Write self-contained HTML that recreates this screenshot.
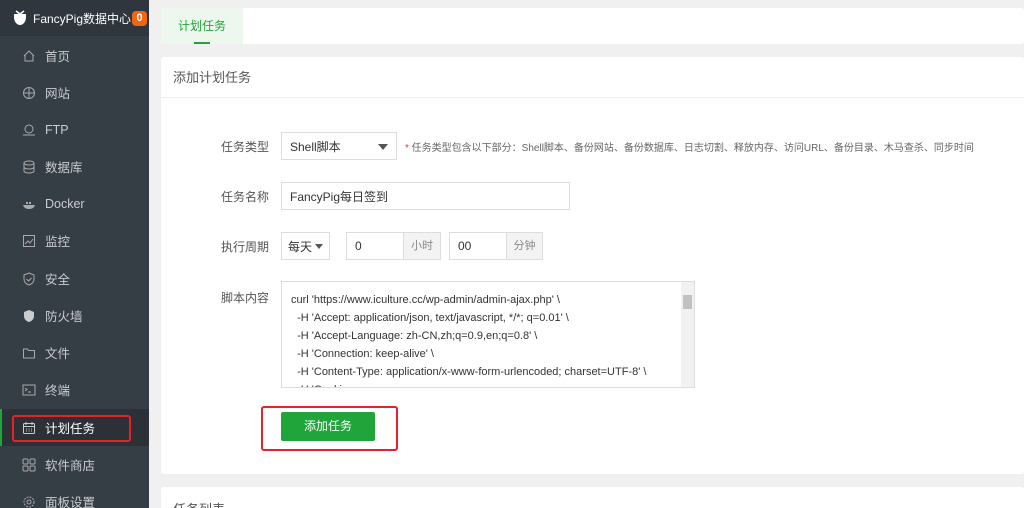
<!DOCTYPE html>
<html style="width:1024px;height:508px;overflow:hidden"><head><meta charset="utf-8"><style>
*{margin:0;padding:0;box-sizing:border-box}
body{width:1024px;height:508px;overflow:hidden;background:#f0f0f0;font-family:"Liberation Sans","Noto Sans CJK SC",sans-serif;font-size:12px;color:#555;position:relative}
.sb{position:absolute;left:0;top:0;width:149px;height:508px;background:#353d45}
.logo{height:36px;background:#2f363d;color:#fff;font-size:12px;display:flex;align-items:center;padding-left:13px;white-space:nowrap}
.badge{background:#f5640f;color:#fff;border-radius:4px;font-size:11px;font-weight:bold;width:15px;height:15px;display:inline-flex;align-items:center;justify-content:center;margin-left:1px}
.it{position:absolute;left:0;width:149px;height:37px;display:flex;align-items:center;padding-left:22px;color:#c9ccd0;font-size:12.5px}
.it .ic{width:14px;height:14px;margin-right:9px;display:inline-block}
.act{background:#2b3137;border-left:2px solid #20a53a;padding-left:20px;color:#fff}
.red{position:absolute;left:12px;top:415px;width:119px;height:27px;border:2px solid #e5222a;border-radius:3px}
.tabs{position:absolute;left:161px;top:8px;width:863px;height:36px;background:#fff;border-radius:3px}
.tab{position:absolute;left:0;top:0;width:82px;height:36px;background:#eef7ee;color:#20a53a;font-size:12px;text-align:center;line-height:36px}
.tab:after{content:"";position:absolute;left:33px;bottom:0;width:16px;height:2px;background:#20a53a}
.card{position:absolute;left:161px;top:57px;width:863px;height:417px;background:#fff;border-radius:3px}
.ch{height:41px;border-bottom:1px solid #eee;padding-left:12px;line-height:41px;font-size:13px;color:#555}
.lab{position:absolute;font-size:12px;color:#555}
.in{position:absolute;border:1px solid #ddd;background:#fff;font-size:12px;color:#333;padding-left:8px;display:flex;align-items:center}
</style></head><body>
<div class="sb">
<div class="logo"><svg width="14" height="16" viewBox="0 0 14 16" style="margin-right:6px;flex:none"><path d="M1 4h12v3c0 5-3 8-6 8S1 12 1 7z" fill="#fff"/><path d="M3 1l4 3 4-3" stroke="#fff" fill="none" stroke-width="1.5"/></svg>FancyPig数据中心<span class="badge">0</span></div>
</div>
<div class="it" style="top:37px"><svg class="ic" viewBox="0 0 14 14"><path d="M2 7l5-5 5 5M3 6v6h8V6" stroke="#aaa" fill="none"/></svg>首页</div>
<div class="it" style="top:74px"><svg class="ic" viewBox="0 0 14 14"><circle cx="7" cy="7" r="5.5" stroke="#aaa" fill="none"/><path d="M2 7h10M7 1.5v11" stroke="#aaa"/></svg>网站</div>
<div class="it" style="top:111px"><svg class="ic" viewBox="0 0 14 14"><circle cx="7" cy="6" r="4" stroke="#aaa" fill="none"/><path d="M1 12h12" stroke="#aaa"/></svg>FTP</div>
<div class="it" style="top:148px"><svg class="ic" viewBox="0 0 14 14"><ellipse cx="7" cy="3" rx="5" ry="2" stroke="#aaa" fill="none"/><path d="M2 3v8c0 1 2 2 5 2s5-1 5-2V3M2 7c0 1 2 2 5 2s5-1 5-2" stroke="#aaa" fill="none"/></svg>数据库</div>
<div class="it" style="top:185px"><svg class="ic" viewBox="0 0 14 14"><path d="M1 8h12c-1 3-3 4-6 4S2 11 1 8z" fill="#aaa"/><rect x="4" y="5" width="2" height="2" fill="#aaa"/><rect x="7" y="5" width="2" height="2" fill="#aaa"/></svg>Docker</div>
<div class="it" style="top:222px"><svg class="ic" viewBox="0 0 14 14"><rect x="1.5" y="1.5" width="11" height="11" stroke="#aaa" fill="none"/><path d="M3 10l3-3 2 2 3-4" stroke="#aaa" fill="none"/></svg>监控</div>
<div class="it" style="top:260px"><svg class="ic" viewBox="0 0 14 14"><path d="M7 1l5 2v4c0 3-2 5-5 6-3-1-5-3-5-6V3z" stroke="#aaa" fill="none"/><path d="M4.5 7l2 2 3-3" stroke="#aaa" fill="none"/></svg>安全</div>
<div class="it" style="top:297px"><svg class="ic" viewBox="0 0 14 14"><path d="M7 1l5 2v4c0 3-2 5-5 6-3-1-5-3-5-6V3z" fill="#ccc"/></svg>防火墙</div>
<div class="it" style="top:334px"><svg class="ic" viewBox="0 0 14 14"><path d="M1.5 3h4l1 1.5h6v7.5h-11z" stroke="#aaa" fill="none"/></svg>文件</div>
<div class="it" style="top:371px"><svg class="ic" viewBox="0 0 14 14"><rect x="1" y="2" width="12" height="10" stroke="#aaa" fill="none"/><path d="M3 5l2 1.5L3 8M6 9h3" stroke="#aaa" fill="none"/></svg>终端</div>
<div class="it act" style="top:409px"><svg class="ic" viewBox="0 0 14 14"><rect x="1.5" y="2.5" width="11" height="10" rx="1" stroke="#ccc" fill="none"/><path d="M1.5 5.5h11M4 1v3M10 1v3M4 8h1M6.5 8h1M9 8h1M4 10h1M6.5 10h1M9 10h1" stroke="#ccc"/></svg>计划任务</div>
<div class="red"></div>
<div class="it" style="top:446px"><svg class="ic" viewBox="0 0 14 14"><rect x="1" y="1" width="5" height="5" rx="1" stroke="#aaa" fill="none"/><rect x="8" y="1" width="5" height="5" rx="1" stroke="#aaa" fill="none"/><rect x="1" y="8" width="5" height="5" rx="1" stroke="#aaa" fill="none"/><rect x="8" y="8" width="5" height="5" rx="1" stroke="#aaa" fill="none"/></svg>软件商店</div>
<div class="it" style="top:483px"><svg class="ic" viewBox="0 0 14 14"><circle cx="7" cy="7" r="5" stroke="#aaa" fill="none" stroke-dasharray="2 1"/><circle cx="7" cy="7" r="2" stroke="#aaa" fill="none"/></svg>面板设置</div>

<div class="tabs"><div class="tab">计划任务</div></div>
<div class="card">
<div class="ch">添加计划任务</div>
</div>
<div class="lab" style="left:221px;top:138px">任务类型</div>
<div class="in" style="left:281px;top:132px;width:116px;height:28px">Shell脚本<span style="position:absolute;right:8px;top:11px;border:5px solid transparent;border-top:6px solid #555;border-bottom:0"></span></div>
<div style="position:absolute;left:405px;top:139px;font-size:10px;color:#666;white-space:nowrap"><span style="color:#e33">*</span> 任务类型包含以下部分：Shell脚本、备份网站、备份数据库、日志切割、释放内存、访问URL、备份目录、木马查杀、同步时间</div>
<div class="lab" style="left:221px;top:188px">任务名称</div>
<div class="in" style="left:281px;top:182px;width:289px;height:28px">FancyPig每日签到</div>
<div class="lab" style="left:221px;top:238px">执行周期</div>
<div class="in" style="left:281px;top:232px;width:49px;height:28px;padding-left:6px">每天<span style="position:absolute;right:6px;top:11px;border:4px solid transparent;border-top:5px solid #555;border-bottom:0"></span></div>
<div class="in" style="left:346px;top:232px;width:95px;height:28px">0<span style="position:absolute;right:0;top:0;width:37px;height:26px;background:#f3f3f3;border-left:1px solid #ddd;color:#888;font-size:11px;text-align:center;line-height:26px">小时</span></div>
<div class="in" style="left:449px;top:232px;width:94px;height:28px">00<span style="position:absolute;right:0;top:0;width:36px;height:26px;background:#f3f3f3;border-left:1px solid #ddd;color:#888;font-size:11px;text-align:center;line-height:26px">分钟</span></div>
<div class="lab" style="left:221px;top:289px">脚本内容</div>
<div style="position:absolute;left:281px;top:281px;width:414px;height:107px;border:1px solid #ddd;overflow:hidden;font-size:11px;color:#333;line-height:18px;padding:9px 0 0 9px;white-space:pre">curl 'https://www.iculture.cc/wp-admin/admin-ajax.php' \
  -H 'Accept: application/json, text/javascript, */*; q=0.01' \
  -H 'Accept-Language: zh-CN,zh;q=0.9,en;q=0.8' \
  -H 'Connection: keep-alive' \
  -H 'Content-Type: application/x-www-form-urlencoded; charset=UTF-8' \
  -H 'Cookie: 
<div style="position:absolute;right:0;top:0;width:13px;height:105px;background:#f1f1f1"><div style="position:absolute;left:2px;top:13px;width:9px;height:14px;background:#c1c1c1"></div></div></div>
<div style="position:absolute;left:261px;top:406px;width:137px;height:45px;border:2px solid #e5222a;border-radius:3px"></div>
<div style="position:absolute;left:281px;top:412px;width:94px;height:29px;background:#20a53a;color:#fff;font-size:12px;text-align:center;line-height:29px;border-radius:2px">添加任务</div>
<div style="position:absolute;left:161px;top:487px;width:863px;height:21px;background:#fff;border-radius:3px 3px 0 0;padding:12px 0 0 12px;font-size:13px;overflow:hidden">任务列表</div>
</body></html>
